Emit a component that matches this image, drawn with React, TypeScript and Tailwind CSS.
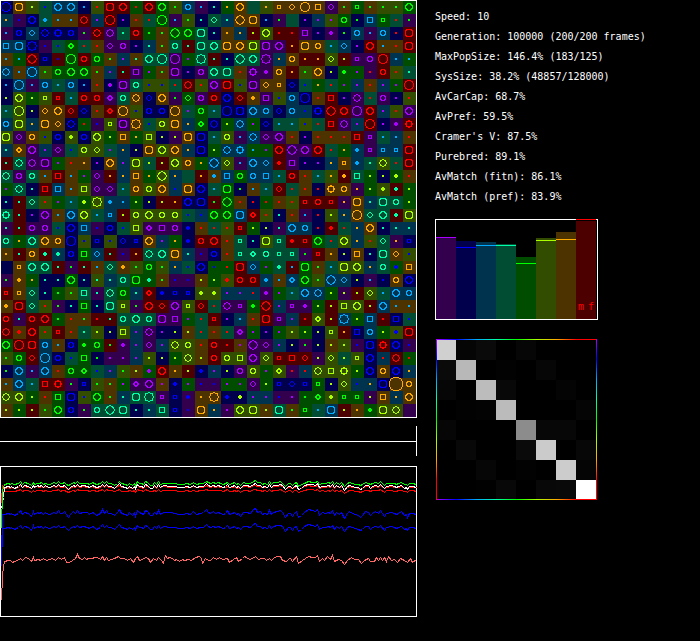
type Point = [number, number];

const BRIGHT: Record<string, string> = {
  p: "#aa00ff",
  b: "#0000ff",
  s: "#00aaff",
  t: "#00ffaa",
  g: "#00ff00",
  l: "#aaff00",
  o: "#ffaa00",
  r: "#ff0000",
};

const DARK: Record<string, string> = {
  p: "#33004d",
  b: "#00004d",
  s: "#00334d",
  t: "#004d33",
  g: "#004d00",
  l: "#334d00",
  o: "#4d3300",
  r: "#4d0000",
};

// One quadrant of each marker, mirrored on both axes
const MARKERS: Record<string, Point[]> = {
  ".": [[0, 0]],
  "+": [[0, 0], [1, 0], [0, 1]],
  "*": [[1, 0], [2, 0], [0, 1], [0, 2], [1, 1]],
  q: [[1, 0], [1, 1], [0, 1]],
  d: [[2, 0], [1, 1], [0, 2]],
  o: [[2, 0], [2, 1], [1, 1], [1, 2], [0, 2]],
  s: [[2, 0], [2, 1], [2, 2], [1, 2], [0, 2]],
  O: [[3, 0], [3, 1], [2, 1], [2, 2], [1, 2], [1, 3], [0, 3]],
  Q: [[3, 0], [3, 1], [3, 2], [2, 2], [2, 3], [1, 3], [0, 3]],
  D: [[3, 0], [2, 1], [2, 2], [1, 2], [0, 3]],
  G: [[3, 0], [2, 0], [2, 1], [2, 2], [1, 2], [0, 2], [0, 3]],
  C: [[4, 0], [4, 1], [3, 2], [3, 3], [2, 3], [1, 4], [0, 4]],
  X: [[4, 0], [3, 1], [3, 2], [2, 2], [2, 3], [1, 3], [0, 4]],
  H: [[4, 0], [3, 1], [3, 2], [3, 3], [2, 3], [1, 3], [0, 4]],
  Z: [[6, 0], [6, 1], [6, 2], [5, 3], [5, 4], [4, 5], [3, 5], [2, 6], [1, 6], [0, 6]],
  _: [],
};

// Each cell: background, marker colour, marker shape
const ROWS = [
  "bbC ooQ ll. tb. ssO ssO bs. lr. rrQ rrO gr. rrO ggO lg. sso ps. bt. go. ooO tt_ lo. ooq ood ooC oos ppd og. ggq og. lg. lg. ggO",
  "so. pb. bbO ts+ os. os. rrD sp. rrC bp. or. tr. ggC ps. lg. bt. ttd st. ooX ooQ bs. pg. tt_ bp. sp. lp. ggo bg. sss ggq tr. pg.",
  "ps. bbo ssd bbD bbG bbo pg. rrD ppD tt. rro gg. og. ggX ggO ttQ bt. oo. so. rl. llO rr. rr. pps bp. pp+ bg. sso ps. sso br. rrQ",
  "sss ssQ bbH pb. tb. gg* tr. or. ppd ppo bp. st. og. tto rt. ttQ ttO ooQ ooO llQ ppQ ppO ro. ooQ ooo ts. ssd bp. rrO os. or. rrQ",
  "os. gs. rrX bbq rb. ggC rro ggo og. sp. ot. ttO ttC ppC gp. ttH rt. bt. ttX ttO ppH so. ooo ro. ro. lld rl. ppq ppo rrC ss. gs.",
  "ssD os. ssC lg. ggo ggO ggO og. sp. rt. pps gp. og. ppQ bp. ppo ttO ttQ or. ppG pp+ ooo ro. lg. ooO bl. gg+ gp. pr. rro lr. tt.",
  "bs. ssC ps. sso ts. sso bs. or. bp+ ppQ tto lb. lb. tr. rrD lr. ppO rrQ lb. ppQ ood ooq bbd tb. go. tr. gp. sp. or. sp. gp. rrC",
  "bl. llO gl. llq rrq ts. rro rro pp* tto ooD bbd ooO pg. ggd ppo rro bbO rrd oo+ pps lb. sso bbC or. rrs bp. ppD tr. ppo bp. lr.",
  "ts. llC bl. ood ooO rrd bbd or. rr* ooC lb. bbo bbo ooC tp. ggo ts. bbC bbQ ssO sso bbd sso sb. bbG rrX rrO ppC rrO sp. lr. ppO",
  "sso llQ so. ooQ ood bbD gr. pb. llq ppQ ooH tb. llo ooQ so. gg* bbD gl. ssD gp. bbd ts. ts. lb. tr. rrs ppD sp. rrC bp. pp+ rrG",
  "llQ ppd ooo lb. bbo ll+ bbo llO gl. oos go. lls bl. pl. ooQ bbQ ts. llo ps. ssD ppd ppO or. bp. or. or. or. rrs ppq ts. ss. or.",
  "st. oo* ppO sp. ppd tb. llo lld tp. so. bl. ooQ llO ooO so. bbQ gl. ssD ssG gs. gp. rrO ppX ppO rrO tr. go. ss+ ppq ssq ssq rrQ",
  "rt. ttD ppD ppQ gp. or. oo. bp. ooO sp. llQ tl. rl. llO ooo go. ssX lld ps. ssO ssd rr+ pps bp. bp. so. ooq ss+ tt. llD tr. rrQ",
  "ttD ppo tto os. rrs os. gp. ppd ro. so. oos go. llX so. tt_ ro. os+ sss ggo sso sss ts. rro or. ts. lo. ro+ tts gl. bl. gl+ or.",
  "gp. ttD bt. rrs sss os. lls ppd ppd ts. ooo llo ooO sb. ooQ bbO ts. ggQ bg. os. ts. rrd tr. or. br. ooG ooo po. gl. ll+ rt+ gl.",
  "bt. rt. ttd lr. gp. ts. gl+ llH ss+ ss. gl. bl. rl. ro. bbO bbQ rg. ggX or. br. gr. or. lr. rrq rro rrq po. ooQ st. ttQ tto gl.",
  "ttG rt. bp. ppO os. ssO llO ts. ssq rl. llo llO llo llo tb. sb. ggO ggO ssQ rr* lr. bt. or. ps. br. ll. so. ooC ttd ttO rt+ llQ",
  "pt. rt. ppo ppo tb. bbO sss pb. bbo tb. lls pp* pps ppo bb+ or. tr. lr. rrq gl. bl. pt. ssO sso br. rr+ tr. so. ooO bt. st. st.",
  "tto go. ttO ooO ooo bbC lb. bbq lb. bbd bbq ooO sp. go. bb+ rro rrO or. ttq bt. llQ ttq rr+ rrq ggO tr. llO so. lr. ttd po. bbq",
  "oo. rt. ooo rt+ st+ bbo ggs ssd rt. pb. ro. ttD ttO ooQ st. pb. bbo or. ttq tt* tto ttq ttq pg. rrq oo. bl. oos bt. ttQ ood lb.",
  "bb_ ooq ttO ttO rt. pg. rt. os. ttd oo+ lg. ggo lg. so. tb. bbO gb. gr. rrQ ssd gp. tt+ rs. ggQ og. ts. llQ llO so. tto gb+ oos",
  "pg. oo+ go. bt. bt. ggO bt. lt. st. tto ggQ gt+ og. pb. pb. ol. gl. lr+ rro rro ss+ os. ss* ggO lg. ssX ssd bl. ps. bb. ooo bbO",
  "rrq ooq ttd bt. gg. lg. tts pt. ttD ggo st. rr* bb+ bbq bbq ll+ ll+ sp. sp. sr. pp+ gp. ts. ssO ssD gl. pl. rl. lld ts. ssO sso",
  "oo+ rrQ ttd lr. pg. bt. ggs bt. ttQ llq pg. rrO rrd ppO llq rrd tr. ppD ppq gg+ rrX sp. ppq pp+ gl. rl. lls llO rl. ssO os. os.",
  "rro pt. rro rrO gg. or. og. rr. rt. tto ttO tto ppQ pps gp. tr. rrq bp. ss. or. rrQ ppq sp. rr. ll* rl. ssH gl. sss rr. bbs tb.",
  "rrD or+ rrO lr. rrq or. tt. ll. bl. lls sp. ppD bp. bl. ol. tr. or. tr. pp* gp. bp. gp. ll. gl. bl. llq ro. bbs sso gl. lb+ rrQ",
  "ggO rrC rrQ sso os. bbo gg+ ggo rg. pp+ sp. ppd sp. llD llo or. rro rr. op. ppX ppd sp. bl. pg. bl. ol. ll. pb. bbQ rrG bbO pb.",
  "lg. ggo rrd ssC bbo tb. ggs bg. pp. pp. sp. ll. bl. gl. llD ol. rro llo lls ppO lld rrq rrs rrd pl. lld tl. llq bbO sr. rrD gr.",
  "bg. ssO ps. ssO or. ggo gg* tb. sp. lg. ol. gp+ rrO oo. rl. bb+ sp. bl. ppo llo gp. ll* pr. sr. llD lls llG gl. bbO ooo bbO so.",
  "os. ssO ts. rrs rrG pg. bbq lg. og. gp. pp* ppO op. bb+ gp. pb. pb. gp. gp. ppd gl. bbq bbd bbq ggq bl. lld sb. so. bbQ ooZ ooo",
  "llD llO gl. or. ggs bbQ lb. ggO og. st. ttQ ttH ppq bbq pb+ oo. ooH bb+ bl+ sp. sp. pb. pp. gg. gg* ll+ ggq ggq pl. oos so. ooO",
  "ol. gl. rl. lg. ggO bbo pg. tto ttX ttQ bt. st. tts bbq pb. ooQ so. pp. llO llQ ol. ttQ og. ggq ts. ssQ rl. oo. gg+ llQ llD pp_",
];

const CELLS = ROWS.flatMap((row, j) =>
  row.split(" ").map((code, i) => ({ x: i * 13, y: j * 13 + 1, bg: code[0], fg: code[1], shape: code[2] }))
);

function markerPath(shape: string) {
  return MARKERS[shape]
    .flatMap(([x, y]) => [[x, y], [-1 - x, y], [x, -1 - y], [-1 - x, -1 - y]])
    .map(([x, y]) => `M${x} ${y}h1v1h-1z`)
    .join("");
}

function World() {
  return (
    <svg width="417" height="418" className="block" shapeRendering="crispEdges" role="img" aria-label="World">
      {CELLS.map((c) => (
        <rect key={`${c.x},${c.y}`} x={c.x} y={c.y} width="13" height="13" fill={DARK[c.bg]} />
      ))}
      {CELLS.map((c) => (
        <g key={`${c.x},${c.y}`} transform={`translate(${c.x + 6} ${c.y + 6})`}>
          {c.shape === "Z" && <circle r="6" fill={DARK[c.bg]} />}
          <path d={markerPath(c.shape)} fill={BRIGHT[c.fg]} />
        </g>
      ))}
      <rect x="0.5" y="0.5" width="416" height="417" fill="none" stroke="#fff" />
    </svg>
  );
}

// Samples are kept in thirds of a pixel
const MATCH =
  "14,314 24,310 30,314 34,311 42,316 54,309 60,300 66,313 72,306 84,309 95,319 100,303 104,312 112,307 118,309 124,306 130,312 136,307 144,313 152,313 160,306 168,309 175,300 180,311 188,309 193,304 198,314 205,321 212,314 220,304 226,310 232,300 238,309 250,307 262,308 268,313 276,306 284,309 290,315 300,309 307,299 313,310 319,300 325,309 335,309 342,317 352,307 359,297 365,310 375,312 382,317 388,308 396,317 402,308 407,318 412,300 418,308 424,309 430,314 437,301 443,305 450,317 457,317 463,306 468,314 475,301 480,313 490,307 510,308 525,309 535,313 550,313 560,309 570,312 580,305 590,313 600,309 610,308 618,298 " +
  "624,306 632,309 639,304 646,309 654,306 662,309 669,313 676,309 682,302 688,313 696,310 702,306 708,314 714,309 721,318 729,306 739,307 752,310 760,299 766,296 772,306 780,304 787,313 794,309 802,313 808,301 814,313 820,306 832,303 842,301 848,307 857,323 864,309 871,309 877,319 884,309 889,305 896,323 904,316 912,307 926,299 936,302 946,304 952,298 958,315 966,308 976,311 984,306 990,310 997,301 1003,315 1010,306 1018,313 1024,306 1033,325 1041,311 1048,304 1056,309 1066,313 1074,315 1081,321 1088,316 1096,304 1104,307 1111,316 1118,309 1127,304 1134,309 1141,301 1152,319 1160,309 1174,307 1184,310 1190,313 1196,309 1204,305 1214,316 1218,312 1222,321 1228,309 1236,309 1248,312";

const SIZE =
  "4,570 7,500 10,468 12,455 24,450 30,452 36,457 44,454 52,452 60,445 66,451 76,443 84,444 94,455 100,443 104,452 116,449 122,451 130,446 140,450 148,449 158,444 166,452 175,443 184,447 193,443 200,457 208,457 216,452 226,446 232,434 238,446 246,449 252,443 258,449 266,444 276,444 282,441 292,443 300,449 307,440 313,452 319,443 326,450 334,447 342,446 350,443 356,438 362,446 374,446 382,452 390,446 400,456 406,444 412,440 418,452 426,449 436,443 444,446 451,457 460,444 468,450 475,443 484,452 491,459 496,436 502,446 508,442 516,446 522,450 530,449 538,455 546,449 554,452 564,448 574,450 586,443 598,438 604,446 608,459 616,444 " +
  "624,450 630,452 640,441 650,449 658,442 666,448 682,444 689,457 700,449 708,443 716,453 726,446 734,440 740,443 748,449 758,444 767,440 776,448 784,444 792,446 800,452 808,444 814,450 822,442 832,440 842,438 848,450 858,454 868,445 872,445 878,455 888,439 896,460 906,452 916,446 926,440 936,443 946,443 952,436 958,455 966,446 974,450 982,440 990,449 997,437 1004,454 1014,447 1024,450 1033,462 1042,452 1054,442 1064,447 1074,449 1084,460 1092,450 1104,446 1112,453 1124,454 1130,443 1136,452 1141,443 1146,450 1154,442 1160,455 1166,440 1174,450 1184,448 1193,457 1202,445 1212,452 1222,457 1230,446 1236,456 1248,447";

const parse = (text: string) => text.split(" ").map((pair) => pair.split(",").map(Number) as Point);

// Chart origin is 168 thirds below the sample origin
const toPoints = (samples: Point[]) =>
  samples.map(([x, y]) => `${Math.floor(x / 3) + 0.5},${Math.floor((y - 168) / 3) + 0.5}`).join(" ");

const series = (mean: number, gain: number, start: Point[]) =>
  toPoints([...start, ...parse(MATCH).map(([x, y]): Point => [x, mean + (y - 310) * gain])]);

const LINES = [
  { color: "#ff6666", points: toPoints(parse(SIZE)) },
  { color: "#0000ff", points: series(310, 1, [[4, 440], [7, 312]]) },
  { color: "#0000ff", points: series(353, 0.8, [[4, 470], [7, 356]]) },
  { color: "#ff0000", points: series(243, 0.4, [[4, 280], [8, 244]]) },
  { color: "#ff0000", points: series(232, 0.5, [[4, 270], [8, 226]]) },
  { color: "#ffffff", points: series(230, 0.7, [[4, 296], [9, 262]]) },
  { color: "#00ff00", points: series(221, 0.6, [[4, 355], [7, 240]]) },
];

function History() {
  return (
    <svg width="417" height="151" className="mt-2.5 block" shapeRendering="crispEdges" role="img" aria-label="History">
      <rect x="0.5" y="0.5" width="416" height="150" fill="none" stroke="#fff" />
      {LINES.map((line, i) => (
        <polyline key={i} points={line.points} fill="none" stroke={line.color} />
      ))}
    </svg>
  );
}

// y of the filled bar and of the marker line on top of it
const BARS = [
  { hue: "p", bar: 18, mark: 18 },
  { hue: "b", bar: 22, mark: 28 },
  { hue: "s", bar: 23, mark: 26 },
  { hue: "t", bar: 25, mark: 26 },
  { hue: "g", bar: 38, mark: 44 },
  { hue: "l", bar: 19, mark: 21 },
  { hue: "o", bar: 13, mark: 20 },
  { hue: "r", bar: 2, mark: 0 },
];

function Bars() {
  return (
    <svg width="163" height="101" className="mt-3 block" shapeRendering="crispEdges" role="img" aria-label="Populations">
      <rect x="0.5" y="0.5" width="162" height="100" fill="none" stroke="#fff" />
      {BARS.map((b, i) => (
        <g key={b.hue}>
          <rect x={1 + i * 20} y={b.bar} width="20" height={100 - b.bar} fill={DARK[b.hue]} />
          <rect x={1 + i * 20} y={b.mark} width="20" height="1" fill={BRIGHT[b.hue]} />
        </g>
      ))}
      <g fill="#ff0000" fontSize="10" fontFamily="'DejaVu Sans Mono', monospace">
        <text x="143" y="91">m</text>
        <text x="153" y="91">f</text>
      </g>
    </svg>
  );
}

const MATRIX = [
  [208, 5, 10, 0, 6, 0, 0, 0],
  [10, 184, 0, 2, 0, 6, 0, 0],
  [6, 0, 188, 8, 0, 0, 4, 0],
  [0, 2, 3, 187, 0, 0, 0, 5],
  [6, 0, 0, 0, 140, 7, 7, 0],
  [0, 8, 0, 0, 10, 203, 0, 7],
  [0, 0, 6, 0, 2, 0, 204, 5],
  [0, 0, 1, 8, 0, 8, 9, 255],
];

function Matrix() {
  const stops = Object.values(BRIGHT).map((color, i) => <stop key={color} offset={i / 8} stopColor={color} />);

  return (
    <svg width="162" height="161" className="mt-[19px] block" shapeRendering="crispEdges" role="img" aria-label="Mating matrix">
      <defs>
        <linearGradient id="across">{stops}</linearGradient>
        <linearGradient id="down" x2="0" y2="1">{stops}</linearGradient>
      </defs>
      {MATRIX.map((row, j) =>
        row.map((v, i) => (
          <rect key={`${i},${j}`} x={1 + i * 20} y={1 + j * 20} width="20" height="20" fill={`rgb(${v},${v},${v})`} />
        ))
      )}
      <rect x="1" y="0" width="161" height="1" fill="url(#across)" />
      <rect x="1" y="160" width="161" height="1" fill="url(#across)" />
      <rect x="1" y="0" width="1" height="161" fill="url(#down)" />
      <rect x="161" y="0" width="1" height="161" fill="url(#down)" />
    </svg>
  );
}

const STATS = [
  "Speed: 10",
  "Generation: 100000 (200/200 frames)",
  "MaxPopSize: 146.4% (183/125)",
  "SysSize: 38.2% (48857/128000)",
  "AvCarCap: 68.7%",
  "AvPref: 59.5%",
  "Cramer's V: 87.5%",
  "Purebred: 89.1%",
  "AvMatch (fitn): 86.1%",
  "AvMatch (pref): 83.9%",
];

export default function App() {
  return (
    <main className="flex min-h-screen items-start gap-[18px] bg-black text-white">
      <section className="shrink-0">
        <World />
        <svg width="417" height="30" className="mt-2 block" shapeRendering="crispEdges" aria-hidden="true">
          <path d="M0 15.5H417M416.5 0V30" stroke="#fff" />
        </svg>
        <History />
      </section>

      <section className="min-w-0 flex-1 pt-[7px]">
        <ul className="font-['DejaVu_Sans_Mono',monospace] text-[10px] leading-5">
          {STATS.map((stat) => (
            <li key={stat}>{stat}</li>
          ))}
        </ul>
        <Bars />
        <Matrix />
      </section>
    </main>
  );
}
